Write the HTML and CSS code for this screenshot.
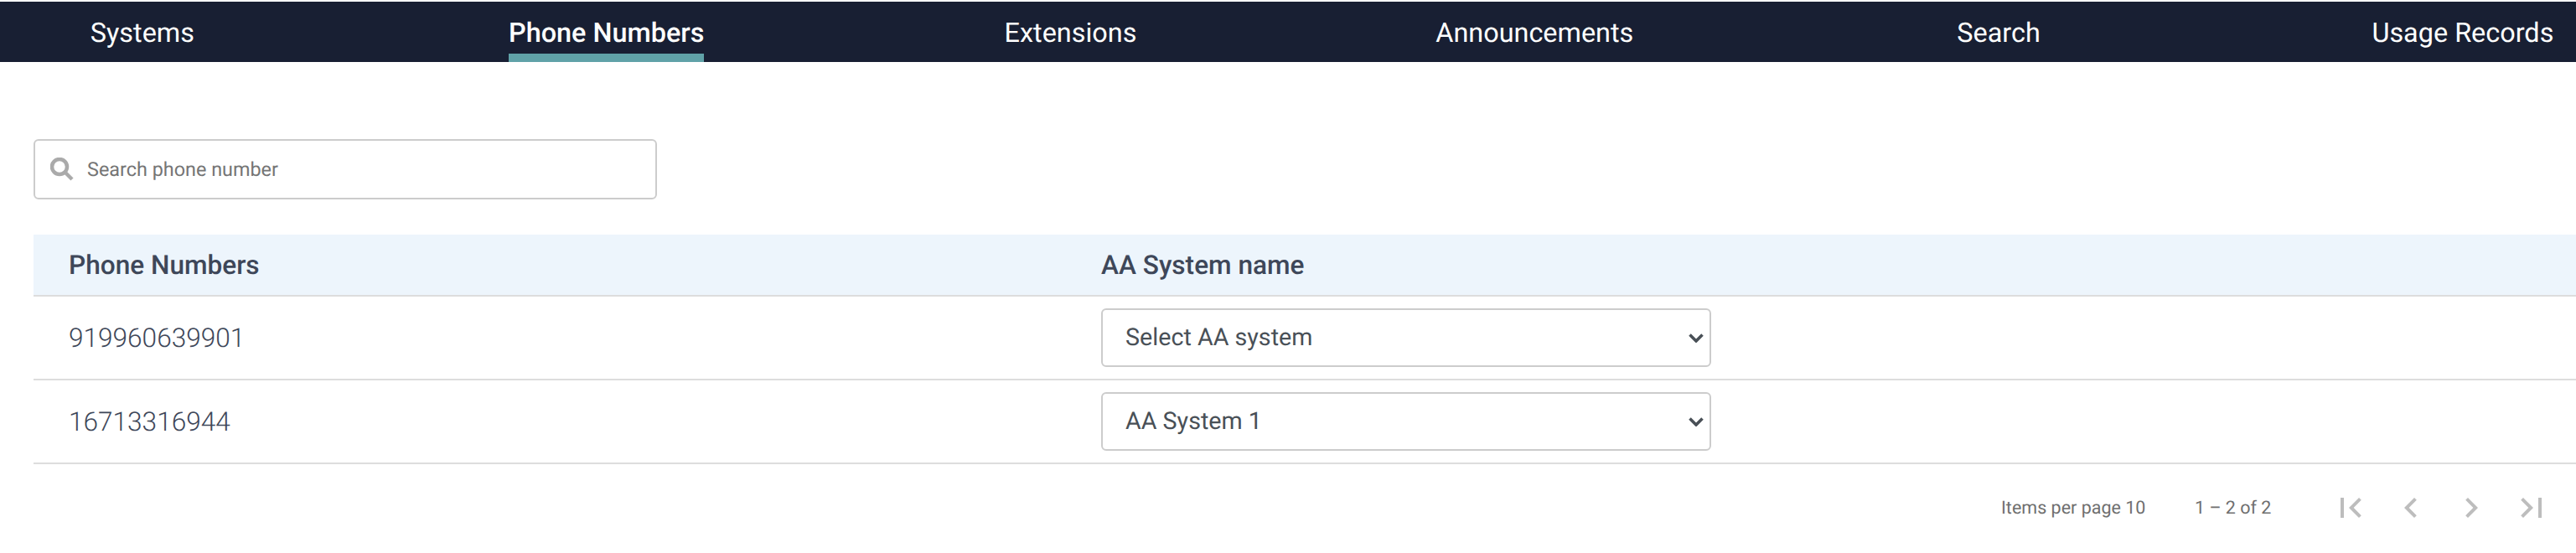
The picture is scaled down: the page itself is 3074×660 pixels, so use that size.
FILE: index.html
```html
<!DOCTYPE html>
<html>
<head>
	<meta charset="utf-8">
	<title>Phone Numbers</title>
	<link rel="stylesheet" href="styles.css">
</head>
<body>
<nav class="nav">
	<a class="nav-item">Systems</a>
	<a class="nav-item active"><span>Phone Numbers</span></a>
	<a class="nav-item">Extensions</a>
	<a class="nav-item">Announcements</a>
	<a class="nav-item">Search</a>
	<a class="nav-item">Usage Records</a>
</nav>
<div class="ctn">
	<div class="search">
		<svg class="search-icon" viewBox="0 0 28 28"><circle cx="11" cy="11" r="9"/><path d="M18 18l8 8"/></svg>
		<input type="text" placeholder="Search phone number">
	</div>
	<table class="numbers">
		<thead>
			<tr><th class="col-number">Phone Numbers</th><th>AA System name</th></tr>
		</thead>
		<tbody>
			<tr>
				<td class="col-number">919960639901</td>
				<td><select><option>Select AA system</option><option>AA System 1</option></select></td>
			</tr>
			<tr>
				<td class="col-number">16713316944</td>
				<td><select><option>AA System 1</option><option>Select AA system</option></select></td>
			</tr>
		</tbody>
	</table>
	<div class="pager">
		<span class="per-page">Items per page 10</span>
		<span class="range">1 – 2 of 2</span>
		<div class="pager-btns">
			<svg viewBox="0 0 24 24"><path d="M18.41 16.59L13.82 12l4.59-4.59L17 6l-6 6 6 6zM6 6h2v12H6z"/></svg>
			<svg viewBox="0 0 24 24"><path d="M15.41 7.41L14 6l-6 6 6 6 1.41-1.41L10.83 12z"/></svg>
			<svg viewBox="0 0 24 24"><path d="M10 6L8.59 7.41 13.17 12l-4.58 4.59L10 18l6-6z"/></svg>
			<svg viewBox="0 0 24 24"><path d="M5.59 7.41L10.18 12l-4.59 4.59L7 18l6-6-6-6zM16 6h2v12h-2z"/></svg>
		</div>
	</div>
</div>
</body>
</html>
```

FILE: styles.css
```css
html,body{
	margin: 0;
	overflow: hidden;
}
body{
	font-family: Roboto,sans-serif;
	background: #fff;
	padding-top: 2px;
	text-rendering: geometricPrecision;
}
.nav{
	display: flex;
	height: 72px;
	background: #181f33;
	overflow: hidden;
}
.nav-item{
	flex: 0 0 553.8px;
	display: flex;
	justify-content: center;
	color: #fff;
	font-size: 32.4px;
	line-height: 74px;
}
.nav-item:first-child{
	margin-left: -107px;
}
.active{
	font-weight: 500;
}
.active span{
	height: 72px;
	box-sizing: border-box;
	border-bottom: 10px solid #60a2a8;
}
.ctn{
	padding: 92px 0 0 40px;
}
.search{
	display: flex;
	align-items: center;
	width: 744px;
	height: 72px;
	box-sizing: border-box;
	border: 2px solid #ccc;
	border-radius: 6px;
	padding-left: 18px;
}
.search-icon{
	flex: none;
	width: 28px;
	height: 28px;
	fill: none;
	stroke: #aaa;
	stroke-width: 4.5;
}
.search input{
	flex: 1;
	border: 0;
	outline: 0;
	margin-left: 16px;
	padding: 0;
	font-family: Roboto,sans-serif;
	font-size: 23.4px;
	color: #757575;
	text-rendering: geometricPrecision;
}
.search input::placeholder{
	color: #757575;
	opacity: 1;
}
.numbers{
	margin-top: 42px;
	width: 3034px;
	border-collapse: separate;
	border-spacing: 0;
	table-layout: fixed;
	color: #3e4759;
}
.numbers th{
	height: 72px;
	padding: 0;
	text-align: left;
	font-size: 31.6px;
	font-weight: 500;
	background: #edf5fc;
	border-bottom: 2px solid #ddd;
}
.numbers td{
	height: 98px;
	padding: 0;
	font-size: 31.6px;
	font-weight: 300;
	border-bottom: 2px solid #ddd;
}
.numbers .col-number{
	width: 1232px;
	padding-left: 42px;
}
.numbers select{
	display: block;
	width: 728px;
	height: 70px;
	padding: 0 27px;
	appearance: none;
	background: #fff url("data:image/svg+xml,%3Csvg xmlns='http://www.w3.org/2000/svg' width='18' height='11' viewBox='0 0 18 11'%3E%3Cpath d='M1.5 1.5L9 9l7.5-7.5' fill='none' stroke='%23495057' stroke-width='3.6'/%3E%3C/svg%3E") no-repeat right 7px center;
	border: 2px solid #ccc;
	border-radius: 6px;
	font-family: Roboto,sans-serif;
	font-size: 28.7px;
	color: #495057;
	text-rendering: geometricPrecision;
}
.pager{
	display: flex;
	align-items: center;
	height: 104px;
	font-size: 21.5px;
	color: #6f6f6f;
}
.per-page{
	margin-left: 2348px;
	width: 231px;
}
.range{
	width: 162px;
}
.pager-btns{
	display: flex;
	gap: 24px;
}
.pager-btns svg{
	width: 48px;
	height: 48px;
	fill: #bdbdbd;
}
```
